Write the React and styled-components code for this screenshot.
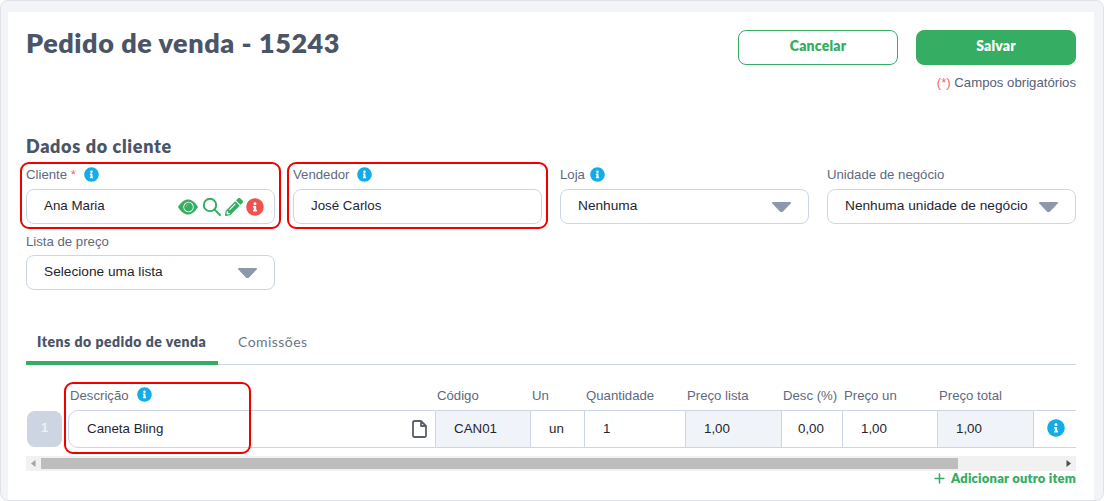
import React from "react";
import styled, { createGlobalStyle, css } from "styled-components";
import { FaPencilAlt, FaInfoCircle } from "react-icons/fa";
import { Plus } from "lucide-react";

const Global = createGlobalStyle`
  html, body { margin: 0; padding: 0; background: #fff; }
  body { font-family: "Liberation Sans", Arial, sans-serif; font-size: 13px; color: #1f2530; }
  * { box-sizing: border-box; }
`;

const heading = `"Lato", "Liberation Sans", sans-serif`;

const Frame = styled.div`
  width: 1104px;
  height: 501px;
  padding: 11px 9px 0 7px;
  background: #f3f4f8;
  border: 1px solid #e0e2e7;
  border-radius: 8px;
  overflow: hidden;
`;
const Sheet = styled.main`
  height: 100%;
  background: #fff;
  padding: 18px 18px 0 18px;
  display: flex;
  flex-direction: column;
`;
const Header = styled.header`
  display: flex;
  justify-content: space-between;
  align-items: flex-start;
  height: 92px;
`;
const Title = styled.h1`
  margin: 0;
  font: 800 27px/26px ${heading};
  letter-spacing: 0.55px;
  color: #4a5568;
`;
const Actions = styled.div`
  display: grid;
  grid-template-columns: 160px 160px;
  column-gap: 18px;
  row-gap: 9px;
`;
const Button = styled.button`
  height: 35px;
  border-radius: 8px;
  border: 1px solid #35ad62;
  padding: 0 0 3px;
  font: 800 14px/1 ${heading};
  letter-spacing: 0.2px;
  background: ${(p) => (p.$primary ? "#35ad62" : "#fff")};
  color: ${(p) => (p.$primary ? "#fff" : "#35ad62")};
`;
const Required = styled.div`
  grid-column: 1 / 3;
  text-align: right;
  font-size: 13.2px;
  line-height: 18px;
  color: #566175;
  span { color: #ee6a6a; }
`;
const SectionTitle = styled.h2`
  margin: 0 0 10px;
  padding-top: 14px;
  font: 800 18px/20px ${heading};
  letter-spacing: 0.65px;
  color: #4a5568;
`;
const FieldGrid = styled.div`
  display: grid;
  grid-template-columns: repeat(4, 249px);
  column-gap: 18px;
  row-gap: 9px;
`;
const annotation = css`
  &::after {
    content: "";
    position: absolute;
    border: 2px solid #ee0000;
    border-radius: 9px;
    pointer-events: none;
    inset: -4px -6px -5px -6px;
  }
`;
const Field = styled.div`
  position: relative;
  ${(p) => p.$marked && annotation}
`;
const LabelRow = styled.div`
  display: flex;
  align-items: center;
  gap: ${(p) => p.$gap ?? 8}px;
  height: 17px;
  margin-bottom: ${(p) => (p.$compact ? 5 : 6)}px;
  font-size: 13.2px;
  color: #5e6a7d;
  b { font-weight: 400; color: #ee6a6a; }
`;
const InfoIcon = styled(FaInfoCircle)`
  width: ${(p) => p.$size || 15}px;
  height: ${(p) => p.$size || 15}px;
  color: ${(p) => p.$color || "#13ace6"};
  flex: none;
`;
const Box = styled.div`
  height: 35px;
  border: 1px solid #cdd5e3;
  border-radius: 8px;
  background: #fff;
  display: flex;
  align-items: center;
  justify-content: space-between;
  padding: 0 ${(p) => p.$right || 17}px 3px 17px;
  font-size: ${(p) => (p.$select ? "13.7px" : "13.33px")};
  color: #1f2530;
  white-space: nowrap;
`;
const Caret = styled.svg`
  width: 19px;
  height: 10px;
  margin-top: 3px;
  fill: #8e98ac;
  flex: none;
`;
const Tools = styled.div`
  display: flex;
  align-items: center;
  gap: 3px;
  color: #35ad62;
  margin-top: 3px;
`;
const ToolEye = styled.svg`
  width: 20px;
  height: 16px;
  fill: #35ad62;
`;
const ToolSearch = styled.svg`
  width: 19px;
  height: 19px;
  margin-left: 1px;
  fill: none;
  stroke: #35ad62;
  stroke-width: 2;
  stroke-linecap: round;
`;
const ToolPencil = styled(FaPencilAlt)`width: 18px; height: 18px; margin-left: 1px;`;

const Tabs = styled.nav`
  display: flex;
  margin-top: 37px;
  border-bottom: 1px solid #cdd5e3;
`;
const Tab = styled.div`
  height: 38px;
  padding: 0 ${(p) => (p.$active ? "11px" : "20px")};
  width: ${(p) => (p.$active ? "192px" : "auto")};
  font: ${(p) => (p.$active ? 800 : 400)} 14px/29px ${heading};
  letter-spacing: ${(p) => (p.$active ? "0.5px" : "0.45px")};
  color: ${(p) => (p.$active ? "#4a5568" : "#6a7587")};
  border-bottom: ${(p) => (p.$active ? "4px solid #35ad62" : "none")};
  margin-bottom: -1px;
  white-space: nowrap;
`;
const Items = styled.section`
  position: relative;
  margin-top: 22px;
`;
const TableGrid = styled.div`
  display: grid;
  grid-template-columns: 42px 368px 95px 54px 101px 96px 61px 95px 96px 42px;
  grid-template-rows: 23px 38px;
`;
const Head = styled.div`
  font-size: 13.2px;
  line-height: 18px;
  color: #5e6a7d;
  padding-left: ${(p) => p.$pad ?? 1}px;
  white-space: nowrap;
  display: flex;
  gap: 8px;
  align-items: flex-start;
`;
const RowNumber = styled.div`
  width: 35px;
  height: 36px;
  margin: 1px 0 0 1px;
  border-radius: 8px;
  background: #ccd5e1;
  color: #eef1f5;
  font-weight: 700;
  font-size: 13px;
  display: flex;
  align-items: center;
  justify-content: center;
  padding-bottom: 3px;
`;
const Cell = styled.div`
  border: 1px solid #cdd5e3;
  border-left: ${(p) => (p.$first ? "1px solid #cdd5e3" : "none")};
  border-right: ${(p) => (p.$last ? "none" : "1px solid #cdd5e3")};
  background: ${(p) => (p.$shade ? "#f0f3f8" : "#fff")};
  border-radius: ${(p) => (p.$first ? "10px 0 0 10px" : "0")};
  display: flex;
  align-items: center;
  padding: 0 ${(p) => (p.$first ? "8px" : "0")} 2px ${(p) => p.$pad ?? 18}px;
  font-size: 13.33px;
  color: #1f2530;
  justify-content: ${(p) => (p.$first ? "space-between" : "flex-start")};
`;
const FileGlyph = styled.svg`
  width: 15px;
  height: 18px;
  fill: #fff;
  stroke: #59606c;
  stroke-width: 1.8;
  stroke-linejoin: round;
  margin-top: 1px;
`;
const Marker = styled.div`
  position: absolute;
  left: 38px;
  top: -5px;
  width: 187px;
  height: 72px;
  border: 2px solid #ee0000;
  border-radius: 9px;
  pointer-events: none;
`;
const Scrollbar = styled.div`
  height: 15px;
  margin-top: 8px;
  background: #f1f1f1;
  display: grid;
  grid-template-columns: 15px 917px 1fr 15px;
  align-items: center;
`;
const Arrow = styled.svg`
  width: 15px;
  height: 15px;
  fill: ${(p) => p.$color};
`;
const Thumb = styled.div`
  height: 11px;
  background: #bdbdbd;
`;
const AddRow = styled.div`
  display: flex;
  justify-content: flex-end;
  align-items: center;
  gap: 4px;
  height: 14px;
  font: 800 13px/14px ${heading};
  letter-spacing: 0.2px;
  color: #35ad62;
`;
const PlusIcon = styled(Plus)`
  width: 15px;
  height: 15px;
`;

const CaretIcon = () => (
  <Caret viewBox="0 0 19 10">
    <path d="M1 0h17c.8 0 1.2.9.7 1.5l-7.6 7.9c-.9.8-2.3.8-3.2 0L.3 1.5C-.2.9.2 0 1 0z" />
  </Caret>
);

export default function App() {
  return (
    <Frame>
      <Global />
      <Sheet>
        <Header>
          <Title>Pedido de venda - 15243</Title>
          <Actions>
            <Button>Cancelar</Button>
            <Button $primary>Salvar</Button>
            <Required><span>(*)</span> Campos obrigatórios</Required>
          </Actions>
        </Header>
        <SectionTitle>Dados do cliente</SectionTitle>
        <FieldGrid>
          <Field $marked>
            <LabelRow><span>Cliente <b>*</b></span><InfoIcon /></LabelRow>
            <Box $right={10}>
              Ana Maria
              <Tools>
                <ToolEye viewBox="0 0 20 16">
                  <path d="M0 8C3.5 2.4 6.5.5 10 .5S16.5 2.4 20 8c-3.5 5.6-6.5 7.5-10 7.5S3.5 13.6 0 8z" />
                  <circle cx="10.5" cy="8" r="5.2" fill="#fff" />
                  <circle cx="10.5" cy="8" r="4.4" />
                  <path d="M8 8.8a2.8 2.8 0 0 1 3.4-3.5 3.6 3.6 0 0 0-3.4 3.5z" fill="#fff" />
                </ToolEye>
                <ToolSearch viewBox="0 0 19 19">
                  <circle cx="8" cy="8" r="6.2" />
                  <path d="M12.6 12.6L18 18" />
                </ToolSearch>
                <ToolPencil />
                <InfoIcon $size={18} $color="#ee5350" />
              </Tools>
            </Box>
          </Field>
          <Field $marked>
            <LabelRow><span>Vendedor</span><InfoIcon /></LabelRow>
            <Box>José Carlos</Box>
          </Field>
          <Field>
            <LabelRow $gap={5}><span>Loja</span><InfoIcon /></LabelRow>
            <Box $select>Nenhuma<CaretIcon /></Box>
          </Field>
          <Field>
            <LabelRow><span>Unidade de negócio</span></LabelRow>
            <Box $select>Nenhuma unidade de negócio<CaretIcon /></Box>
          </Field>
          <Field>
            <LabelRow $compact><span>Lista de preço</span></LabelRow>
            <Box $select>Selecione uma lista<CaretIcon /></Box>
          </Field>
        </FieldGrid>
        <Tabs>
          <Tab $active>Itens do pedido de venda</Tab>
          <Tab>Comissões</Tab>
        </Tabs>
        <Items>
          <TableGrid>
            <span />
            <Head $pad={2}>Descrição<InfoIcon /></Head>
            <Head>Código</Head>
            <Head>Un</Head>
            <Head>Quantidade</Head>
            <Head>Preço lista</Head>
            <Head>Desc (%)</Head>
            <Head>Preço un</Head>
            <Head>Preço total</Head>
            <span />
            <RowNumber>1</RowNumber>
            <Cell $first>
              Caneta Bling
              <FileGlyph viewBox="0 0 15 18">
                <path d="M2.5 1H9l5 5v9.5a1.5 1.5 0 0 1-1.5 1.5h-10A1.5 1.5 0 0 1 1 15.5v-13A1.5 1.5 0 0 1 2.5 1z M9 1v5h5" />
              </FileGlyph>
            </Cell>
            <Cell $shade>CAN01</Cell>
            <Cell>un</Cell>
            <Cell>1</Cell>
            <Cell $shade>1,00</Cell>
            <Cell $pad={16}>0,00</Cell>
            <Cell>1,00</Cell>
            <Cell $shade>1,00</Cell>
            <Cell $last $pad={13}><InfoIcon $size={18} /></Cell>
          </TableGrid>
          <Marker />
          <Scrollbar>
            <Arrow viewBox="0 0 15 15" $color="#a3a3a3"><path d="M9.5 4v7L5 7.5z" /></Arrow>
            <Thumb />
            <span />
            <Arrow viewBox="0 0 15 15" $color="#505050"><path d="M5.5 4v7L10 7.5z" /></Arrow>
          </Scrollbar>
          <AddRow><PlusIcon strokeWidth={2.5} />Adicionar outro item</AddRow>
        </Items>
      </Sheet>
    </Frame>
  );
}
